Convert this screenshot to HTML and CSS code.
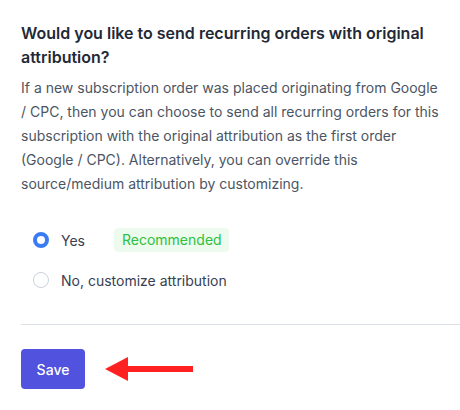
FILE: index.html
```html
<!DOCTYPE html>
<html>
<head>
<meta charset="utf-8">
<link rel="stylesheet" href="styles.css">
</head>
<body>
<div class="panel">
  <h2 class="title">Would you like to send recurring orders with original attribution?</h2>
  <p class="desc">If a new subscription order was placed originating from Google / CPC, then you can choose to send all recurring orders for this subscription with the original attribution as the first order (Google / CPC). Alternatively, you can override this source/medium attribution by customizing.</p>
  <div class="options">
    <label class="option">
      <span class="radio checked"></span>
      <span class="label">Yes</span>
      <span class="badge">Recommended</span>
    </label>
    <label class="option">
      <span class="radio"></span>
      <span class="label">No, customize attribution</span>
    </label>
  </div>
  <div class="divider"></div>
  <div class="actions">
    <button class="save">Save</button>
    <svg class="arrow" width="90" height="26" viewBox="0 0 90 26">
      <polygon points="0,13 23,1 23,25" fill="#ff2121"/>
      <rect x="20" y="10" width="68" height="6" fill="#ff2121"/>
    </svg>
  </div>
</div>
</body>
</html>
```
FILE: styles.css
```css
html, body {
  margin: 0;
  padding: 0;
  background: #ffffff;
}
body {
  font-family: Inter, "Noto Sans", sans-serif;
  width: 460px;
  height: 410px;
  overflow: hidden;
}
.panel {
  padding: 21px 0 0 21px;
}
.title {
  margin: 0;
  width: 420px;
  font-size: 16px;
  line-height: 24px;
  font-weight: 600;
  color: #1f2937;
}
.desc {
  margin: 7px 0 0 0;
  width: 420px;
  font-size: 14px;
  line-height: 24px;
  color: #4b5563;
}
.options {
  margin-top: 32px;
  display: flex;
  flex-direction: column;
  gap: 16px;
  padding-left: 12px;
}
.option {
  display: flex;
  align-items: center;
  height: 24px;
  font-size: 14px;
  color: #374151;
}
.radio {
  box-sizing: border-box;
  width: 16px;
  height: 16px;
  border-radius: 50%;
  border: 1px solid #cbd2dc;
  background: #fff;
  margin-right: 12px;
  flex: none;
}
.radio.checked {
  border: 4px solid #3b7cf5;
}
.badge {
  margin-left: 29px;
  height: 24px;
  line-height: 24px;
  padding: 0 7px 0 8px;
  border-radius: 4px;
  background: #ecfbee;
  color: #2cc13e;
}
.divider {
  margin-top: 32px;
  height: 1px;
  background: #dde2e8;
}
.actions {
  margin-top: 24px;
  display: flex;
  align-items: center;
}
.save {
  width: 64px;
  height: 40px;
  border: none;
  border-radius: 4px;
  background: #5152dd;
  color: #ffffff;
  font-family: Inter, "Noto Sans", sans-serif;
  font-size: 14px;
  font-weight: 500;
  padding: 0;
}
.arrow {
  margin-left: 20px;
  display: block;
}
```
